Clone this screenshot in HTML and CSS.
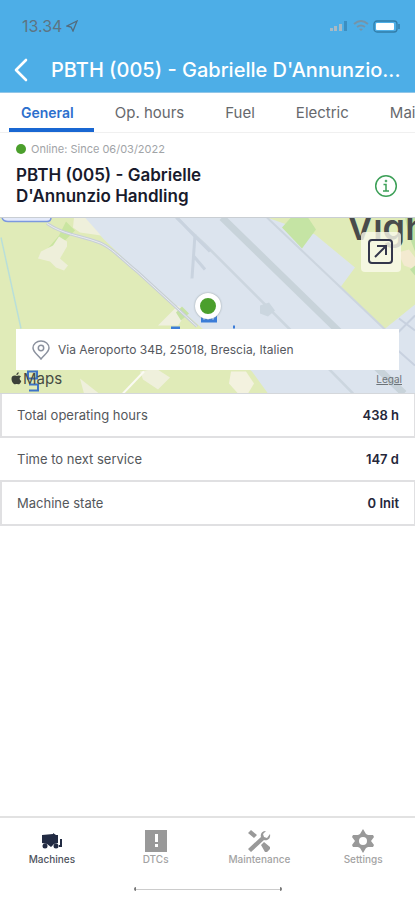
FILE: index.html
```html
<!DOCTYPE html>
<html lang="en">
<head>
    <meta charset="UTF-8">
    <meta name="viewport" content="width=device-width, initial-scale=1.0">
    <title>PBTH (005) - Gabrielle D'Annunzio Handling</title>
    <link rel="stylesheet" href="styles.css">
</head>
<body>
    <header class="header">
        <div class="status-bar">
            <div class="clock">
                <span>13.34</span>
                <svg width="12" height="12" viewBox="0 0 12 12"><path d="M11 1L1 6l4 1 2 4z" fill="none" stroke="#536b7c" stroke-width="1.3"/></svg>
            </div>
            <div class="signals">
                <svg width="20" height="12" viewBox="0 0 20 12">
                    <path d="M1 8h3v3H1zM5 6h3v5H5zM10 4h3v7h-3z" fill="#a9bac5"/>
                    <path d="M15 1h3v10h-3z" fill="#3c8fc2"/>
                </svg>
                <svg width="16" height="12" viewBox="0 0 16 12">
                    <path d="M1 4q7-6 14 0M4 7q4-3 8 0" fill="none" stroke="#7594a8" stroke-width="1.8"/>
                    <path d="M6 9q2-1 4 0l-2 2z" fill="#7594a8"/>
                </svg>
                <svg width="28" height="13" viewBox="0 0 28 13">
                    <rect x="1" y="1" width="23" height="11" rx="3" fill="none" stroke="#327da9" stroke-width="1.3"/>
                    <rect x="3" y="3" width="18" height="7" rx="1" fill="#fff"/>
                    <path d="M26 4v5" stroke="#327da9" stroke-width="1.5"/>
                </svg>
            </div>
        </div>
        <div class="title-bar">
            <button class="back" type="button" aria-label="Back">
                <svg width="16" height="24" viewBox="0 0 16 24"><path d="M13 2L3 12l10 10" fill="none" stroke="#fff" stroke-width="2.6" stroke-linecap="round" stroke-linejoin="round"/></svg>
            </button>
            <h1>PBTH (005) - Gabrielle D'Annunzio...</h1>
        </div>
    </header>

    <nav class="tabs">
        <a class="active" href="#general">General</a>
        <a href="#hours">Op. hours</a>
        <a href="#fuel">Fuel</a>
        <a href="#electric">Electric</a>
        <a href="#maintenance">Maintenance</a>
    </nav>

    <main>
        <section class="machine">
            <div class="machine-text">
                <p class="online">Online: Since 06/03/2022</p>
                <h2>PBTH (005) - Gabrielle D'Annunzio Handling</h2>
            </div>
            <button class="info" type="button" aria-label="Machine info">
                <svg width="24" height="24" viewBox="0 0 24 24" fill="none" stroke="#3da058" stroke-width="1.5">
                    <circle cx="12" cy="12" r="10.3"/>
                    <path d="M9.5 10.5H12V17M9 17h6"/>
                    <circle cx="12" cy="7" r="1" fill="#3da058" stroke-width="0.6"/>
                </svg>
            </button>
        </section>

        <section class="map">
            <svg class="map-canvas" viewBox="0 0 415 176" preserveAspectRatio="xMidYMid slice">
                <rect width="415" height="176" fill="#e0ebb8"/>
                <!-- airport ground -->
                <path d="M84 0l20 22 20 19 76 68 52 45 16 22h147V87l-31 25-43-43 14-19-40-33L267 0z" fill="#dce4ee"/>
                <path d="M267 0l118 112" fill="none" stroke="#ccd5df" stroke-width="2"/>
                <path d="M222 0l118 115 64 61" fill="none" stroke="#c8d3da" stroke-width="7"/>
                <path d="M176 0l30 28 87 87 60 61" fill="none" stroke="#ccd6df" stroke-width="2.5"/>
                <path d="M177 0l17 18 16 16M195 17l-3 44M194 39l11 13" fill="none" stroke="#c9d3df" stroke-width="3"/>
                <path d="M260 88l9-3 6 8-7 6-8-3z" fill="#cbd6df"/>
                <path d="M415 98l-24 24M399 101l16 12M398 133l17 15" fill="none" stroke="#c8d1df" stroke-width="2"/>
                <!-- parks and fields -->
                <path d="M66 4l9 9-16 16-13 4 13-15z" fill="#c9e5a0"/>
                <path d="M282 10l9-10h17l8 12-14 19z" fill="#c5e4a4"/>
                <path d="M74 0h11l16 18-21-3-7-5z" fill="#eff0db"/>
                <path d="M59 19l8 5v5l-7 12 8 7-4 5-8-3-6-6-12-3 3-7 12-6z" fill="#eeefda"/>
                <path d="M158 108l20-20 9 7-9 13z" fill="#eff0df"/>
                <path d="M182 89l7 7-8 7-5-8z" fill="#c6e2a5"/>
                <path d="M140 154l16-3 14 9-12 12-15-10zM80 161l19 15H84z" fill="#eff0dc"/>
                <path d="M123 176l21-22" stroke="#fafaf3" stroke-width="2"/>
                <path d="M231 154h15l8 12-6 10h-10l-9-10z" fill="#f3f2df"/>
                <path d="M398 35l11-3 6 8v12l-11-4z" fill="#f3ead0"/>
                <path d="M405 0h10v34l-6-16zM410 52l5-4v10z" fill="#bfe1a4"/>
                <!-- roads -->
                <path d="M47 6c16 11 33 12 49 18 13 3 28 20 41 30l60 55" fill="none" stroke="#c7ced8" stroke-width="3"/>
                <path d="M47 6c16 11 33 12 49 18 13 3 28 20 41 30l60 55" fill="none" stroke="#e9ecef" stroke-width="1"/>
                <path d="M1 20l20 91" stroke="#b9dfd9" stroke-width="1.5"/>
                <path d="M2 0q1 4 6 4h39q4 0 4-4" fill="#e4eafa" stroke="#7c98df" stroke-width="1.5"/>
                <!-- transit markers -->
                <path d="M171 109h9v3h-9zM233 108h2v3h-2zM201 95h16v10h-16z" fill="#3b7cd8"/>
                <path d="M204 102v-3M208 102v-4M213 102v-3" stroke="#c9ddf8" stroke-width="1.5"/>
                <path d="M28 154h9v7h-9zM29 167h9v6h-9" fill="none" stroke="#3d74c6" stroke-width="2"/>
                <text class="place" x="347" y="22">Vigh</text>
            </svg>
            <button class="expand" type="button" aria-label="Open map">
                <svg width="28" height="28" viewBox="0 0 28 28" fill="none" stroke="#33364b" stroke-width="2">
                    <rect x="2" y="2" width="23" height="23" rx="3"/>
                    <path d="M8 19L19 8M10 8h9v9"/>
                </svg>
            </button>
            <span class="pin"></span>
            <div class="address">
                <svg width="18" height="20" viewBox="0 0 18 20" fill="none" stroke="#8b919e" stroke-width="1.5">
                    <path d="M9 19C6 15 1 12 1 8a8 7 0 0 1 16 0c0 4-5 7-8 11z"/>
                    <circle cx="9" cy="8" r="2.7"/>
                </svg>
                <span>Via Aeroporto 34B, 25018, Brescia, Italien</span>
            </div>
            <div class="map-footer">
                <div class="maps-logo">
                    <svg width="11" height="13" viewBox="0 0 11 13" fill="#3c413a"><path d="M10 4.5C8 5.600 8.300 8 10.300 9 9.500 11.500 8.300 12.500 7 12.300c-1-.5-1.700-.5-2.700 0C2.500 12.600.5 9.500.5 6.800.5 4 3 2.900 5.500 4 7.500 3 9 3.300 10 4.500zM5.400 3.200C5.300 1.700 6.300.6 7.700.3 7.800 1.900 6.900 3 5.400 3.200z"/></svg>
                    <span>Maps</span>
                </div>
                <a href="#legal">Legal</a>
            </div>
        </section>

        <dl class="facts">
            <div class="fact boxed">
                <dt>Total operating hours</dt>
                <dd>438 h</dd>
            </div>
            <div class="fact">
                <dt>Time to next service</dt>
                <dd>147 d</dd>
            </div>
            <div class="fact boxed">
                <dt>Machine state</dt>
                <dd>0 Init</dd>
            </div>
        </dl>
    </main>

    <footer class="bottom">
        <nav class="bottom-nav">
            <a class="active" href="#machines">
                <svg width="24" height="24" viewBox="0 0 24 24" fill="#222b43">
                    <path d="M2 6l11-1V4l3 2h2v8l-4 1-3 3-4-3-5-1z"/>
                    <path d="M20 10h2v8h-3v-2h1z"/>
                    <circle cx="5" cy="17" r="2.500"/><circle cx="16" cy="17" r="2.500"/>
                </svg>
                <span>Machines</span>
            </a>
            <a href="#dtcs">
                <svg width="24" height="24" viewBox="0 0 24 24">
                    <path d="M1 1h22v22H1z" fill="#999"/>
                    <path d="M11 5h3v8h-3zM11 15h3v3h-3z" fill="#fff"/>
                </svg>
                <span>DTCs</span>
            </a>
            <a href="#service">
                <svg width="24" height="24" viewBox="0 0 24 24" fill="#999">
                    <path d="M1 4l3-3 6 5-3 3zM14 16l3-3 6 5v2l-3 3h-2z"/>
                    <path d="M1 20L14 8c-1-3 1-6 5-6l-3 3 1 3 3 1 3-4c1 5-3 7-6 6L4 23z"/>
                </svg>
                <span>Maintenance</span>
            </a>
            <a href="#settings">
                <svg width="24" height="24" viewBox="0 0 24 24" fill="#999">
                    <path fill-rule="evenodd" d="M12 0l3 5 2 1h5l1 2-3 4 3 4-1 2h-5l-2 1-3 5-3-5-2-1H2l-1-2 3-4-3-4 1-2h5l2-1zM12 8a4 4 0 1 0 0 8 4 4 0 0 0 0-8z"/>
                </svg>
                <span>Settings</span>
            </a>
        </nav>
        <div class="home-indicator"></div>
    </footer>
</body>
</html>
```

FILE: styles.css
```css
* {
    box-sizing: border-box;
}
body {
    margin: 0;
    min-height: 100vh;
    display: flex;
    flex-direction: column;
    font-family: Inter, "Liberation Sans", sans-serif;
    color: #181a2c;
    background: #fff;
}
h1, h2, p, dl, dd {
    margin: 0;
}
svg {
    display: block;
    flex: none;
}
a {
    color: inherit;
    text-decoration: none;
}
button {
    padding: 0;
    border: 0;
    background: none;
}
main {
    flex: 1;
}

/* header */
.header {
    background: #4daee7;
    border-bottom: 1px solid #91c6e8;
    color: #fff;
}
.status-bar {
    display: flex;
    justify-content: space-between;
    align-items: center;
    height: 48px;
    padding: 4px 14px 0 22px;
}
.clock,
.signals {
    display: flex;
    align-items: center;
    gap: 4px;
    font-size: 16px;
    color: #5d7482;
}
.title-bar {
    display: flex;
    align-items: center;
    gap: 22px;
    height: 44px;
    padding: 0 6px 0 13px;
}
.title-bar h1 {
    min-width: 0;
    overflow: hidden;
    white-space: nowrap;
    text-overflow: ellipsis;
    font-size: 20px;
    font-weight: 500;
    line-height: 28px;
}

/* tabs */
.tabs {
    display: flex;
    height: 40px;
    overflow: hidden;
    white-space: nowrap;
    border-bottom: 1px solid #f0f0f0;
    font-size: 15px;
    line-height: 40px;
    color: #66686c;
}
.tabs a {
    height: 39px;
    margin-left: 9px;
    padding: 0 20px 0 12px;
}
.tabs .active {
    color: #2c6fcd;
    font-size: 14px;
    font-weight: 600;
    border-bottom: 4px solid #1967d2;
}

/* machine */
.machine {
    display: flex;
    justify-content: space-between;
    align-items: flex-end;
    padding: 8px 17px 10px 16px;
}
.machine-text {
    width: 212px;
}
.online {
    display: flex;
    align-items: center;
    gap: 5px;
    font-size: 11px;
    line-height: 16px;
    white-space: nowrap;
    color: #a1a4a7;
}
.online:before {
    content: "";
    width: 10px;
    height: 10px;
    border-radius: 50%;
    background: #4b9f2c;
}
.machine h2 {
    margin-top: 8px;
    font-size: 17px;
    font-weight: 600;
    line-height: 21px;
}
.info {
    margin-bottom: 9px;
}

/* map */
.map {
    position: relative;
    display: flex;
    flex-direction: column;
    justify-content: flex-end;
    height: 176px;
    border-top: 1px solid #c9ced3;
}
.map-canvas {
    position: absolute;
    inset: 0;
    width: 100%;
    height: 100%;
}
.place {
    font-size: 36px;
    font-weight: 600;
    fill: #484b4b;
}
.expand {
    position: absolute;
    top: 14px;
    right: 14px;
    display: grid;
    place-items: center;
    width: 40px;
    height: 40px;
    border-radius: 4px;
    background: rgba(250, 250, 235, 0.8);
}
.pin {
    position: absolute;
    top: 75px;
    left: 50%;
    width: 26px;
    height: 26px;
    border: 5px solid #fff;
    border-radius: 50%;
    background: #4b9f2c;
    box-shadow: 0 0 2px #8d989c;
    transform: translateX(-50%);
}
.address {
    position: relative;
    display: flex;
    align-items: center;
    gap: 8px;
    height: 41px;
    margin: 0 16px;
    padding: 0 16px;
    background: #fff;
    font-size: 12px;
    color: #55585e;
}
.map-footer {
    position: relative;
    display: flex;
    justify-content: space-between;
    align-items: center;
    height: 23px;
    padding: 0 13px 6px 11px;
}
.maps-logo {
    display: flex;
    align-items: center;
    gap: 1px;
    font-size: 15px;
    line-height: 16px;
    color: #454b43;
}
.map-footer a {
    font-size: 10px;
    text-decoration: underline;
    color: #6c7378;
}

/* facts */
.facts {
    border-top: 1px solid #d4d7db;
}
.fact {
    display: flex;
    justify-content: space-between;
    align-items: center;
    height: 44px;
    padding: 0 16px 0 17px;
    border-bottom: 2px solid #e0e0e2;
    font-size: 13px;
}
.boxed {
    padding: 0 15px;
    border-left: 2px solid #e0e0e2;
    border-right: 1px solid #e0e0e2;
}
.fact dt {
    color: #54575b;
}
.fact dd {
    font-weight: 600;
    color: #25273a;
}

/* bottom bar */
.bottom {
    border-top: 2px solid #e2e2e2;
}
.bottom-nav {
    display: grid;
    grid-template-columns: repeat(4, 1fr);
    padding-top: 11px;
}
.bottom-nav a {
    display: flex;
    flex-direction: column;
    align-items: center;
    font-size: 10px;
    font-weight: 500;
    line-height: 13px;
    color: #a3a3a3;
}
.bottom-nav .active {
    color: #4e535d;
}
.home-indicator {
    width: 148px;
    height: 4px;
    margin: 21px auto 9px;
    border: solid #777;
    border-width: 0 2px;
    border-radius: 3px;
    background: linear-gradient(#ccc, #ccc) center / 100% 1px no-repeat;
}
```
